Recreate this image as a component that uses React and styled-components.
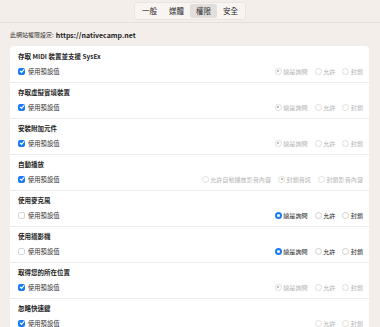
import React from "react";
import styled, { createGlobalStyle } from "styled-components";

const GlobalStyle = createGlobalStyle`
  html, body {
    margin: 0;
    padding: 0;
    background: #f4eeea;
    font-family: "Noto Sans CJK TC", "Noto Sans", sans-serif;
  }
`;

const Page = styled.div`
  width: 380px;
  height: 327px;
  overflow: hidden;
  background: #f4eeea;
`;

const Header = styled.div`
  height: 22px;
  display: flex;
  justify-content: center;
  align-items: center;
  border-bottom: 1px solid #e6e0dc;
`;

const Tabs = styled.div`
  display: flex;
  align-items: center;
  height: 14px;
  padding: 1px;
  border-radius: 3px;
  background: #f8f4f1;
  border: 1px solid #ebe5e1;
`;

const Tab = styled.div`
  height: 14px;
  line-height: 14px;
  padding: 0 6px;
  font-size: 7.5px;
  color: #2a2a2a;
  border-radius: 2px;
  background: ${({ $active }) => ($active ? "#e2dedb" : "transparent")};
`;

const SiteLine = styled.div`
  height: 23px;
  display: flex;
  align-items: center;
  padding-left: 10px;
  gap: 2px;
`;

const SiteLabel = styled.span`
  font-size: 6px;
  color: #333;
`;

const SiteUrl = styled.span`
  font-size: 7px;
  font-weight: 700;
  color: #222;
`;

const Panel = styled.div`
  margin: 0 11px 0 10px;
  background: #fff;
  border-radius: 4px;
  padding-top: 1px;
  height: 290px;
  overflow: hidden;
`;

const Section = styled.div`
  padding: 4px 6px 4px 8px;
  border-bottom: 1px solid #eeeae7;
`;

const Title = styled.div`
  height: 11px;
  line-height: 11px;
  font-size: 6.5px;
  font-weight: 700;
  color: #1e1e1e;
`;

const Row = styled.div`
  margin-top: 2px;
  height: 14px;
  display: flex;
  align-items: center;
  justify-content: space-between;
`;

const CheckLabel = styled.label`
  display: flex;
  align-items: center;
  gap: 3px;
  font-size: 6.3px;
  color: #333;
`;

const Box = styled.span`
  width: 7px;
  height: 7px;
  box-sizing: border-box;
  border-radius: 2px;
  display: flex;
  align-items: center;
  justify-content: center;
  background: ${({ $checked }) => ($checked ? "#1a7cf5" : "#fff")};
  border: ${({ $checked }) => ($checked ? "none" : "1px solid #d6d6d6")};
`;

const Radios = styled.div`
  display: flex;
  align-items: center;
  gap: 7px;
`;

const RadioItem = styled.span`
  display: flex;
  align-items: center;
  gap: 1.5px;
  font-size: 6.1px;
  color: ${({ $disabled }) => ($disabled ? "#b5b5b5" : "#2a2a2a")};
`;

const Dot = styled.span`
  width: 7px;
  height: 7px;
  box-sizing: border-box;
  border-radius: 50%;
  display: flex;
  align-items: center;
  justify-content: center;
  background: ${({ $on, $disabled }) => ($on && !$disabled ? "#1a7cf5" : "#fff")};
  border: ${({ $on, $disabled }) =>
    $on && !$disabled ? "none" : $disabled ? "1px solid #dedede" : "1px solid #cfcfcf"};

  &::after {
    content: "";
    display: ${({ $on }) => ($on ? "block" : "none")};
    width: ${({ $disabled }) => ($disabled ? "2px" : "3px")};
    height: ${({ $disabled }) => ($disabled ? "2px" : "3px")};
    border-radius: 50%;
    background: ${({ $disabled }) => ($disabled ? "#a8a8a8" : "#fff")};
  }
`;

const Check = () => (
  <svg width="6" height="6" viewBox="0 0 10 10">
    <path d="M2 5.2 L4.2 7.4 L8.2 2.6" fill="none" stroke="#fff" strokeWidth="1.8" strokeLinecap="round" strokeLinejoin="round" />
  </svg>
);

const ASK = ["總是詢問", "允許", "封鎖"];

const sections = [
  { title: "存取 MIDI 裝置並支援 SysEx", checked: true, options: ASK, selected: 0 },
  { title: "存取虛擬實境裝置", checked: true, options: ASK, selected: 0 },
  { title: "安裝附加元件", checked: true, options: ASK, selected: 0 },
  { title: "自動播放", checked: true, options: ["允許自動播放影音內容", "封鎖音訊", "封鎖影音內容"], selected: 1 },
  { title: "使用麥克風", checked: false, options: ASK, selected: 0 },
  { title: "使用攝影機", checked: false, options: ASK, selected: 0 },
  { title: "取得您的所在位置", checked: true, options: ASK, selected: 0 },
  { title: "忽略快速鍵", checked: true, options: ["允許", "封鎖"], selected: -1 },
];

export default function App() {
  return (
    <Page>
      <GlobalStyle />
      <Header>
        <Tabs>
          <Tab>一般</Tab>
          <Tab>媒體</Tab>
          <Tab $active>權限</Tab>
          <Tab>安全</Tab>
        </Tabs>
      </Header>
      <SiteLine>
        <SiteLabel>此網站權限設定:</SiteLabel>
        <SiteUrl>https://nativecamp.net</SiteUrl>
      </SiteLine>
      <Panel>
        {sections.map((s) => (
          <Section key={s.title}>
            <Title>{s.title}</Title>
            <Row>
              <CheckLabel>
                <Box $checked={s.checked}>{s.checked && <Check />}</Box>
                使用預設值
              </CheckLabel>
              <Radios>
                {s.options.map((o, i) => (
                  <RadioItem key={o} $disabled={s.checked}>
                    <Dot $on={i === s.selected} $disabled={s.checked} />
                    {o}
                  </RadioItem>
                ))}
              </Radios>
            </Row>
          </Section>
        ))}
      </Panel>
    </Page>
  );
}
